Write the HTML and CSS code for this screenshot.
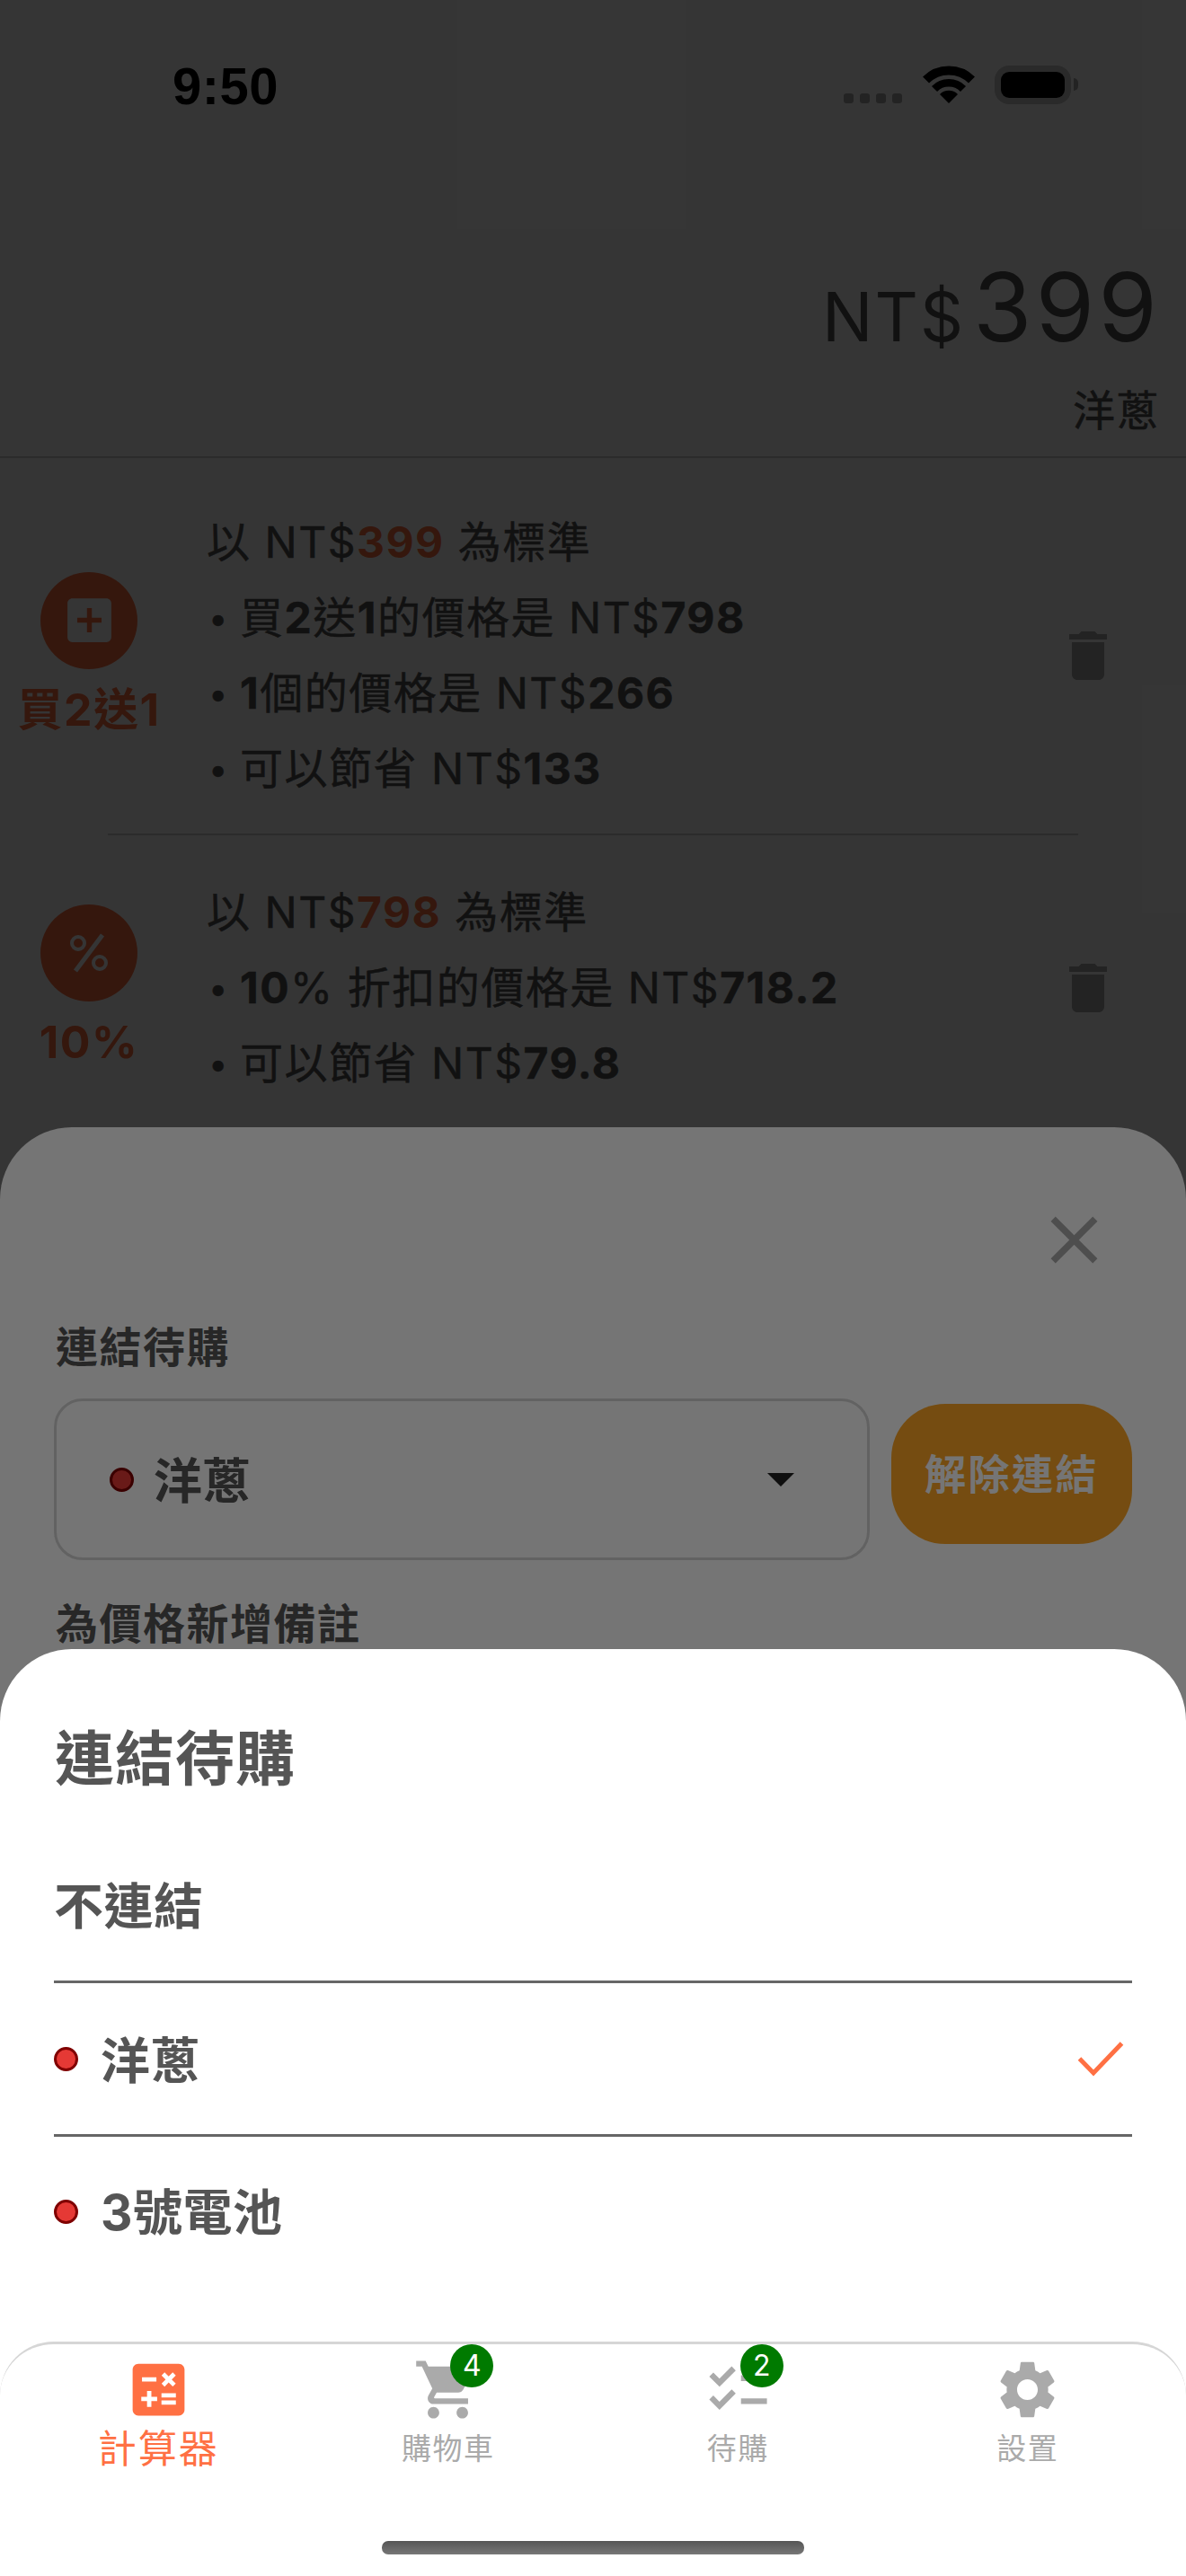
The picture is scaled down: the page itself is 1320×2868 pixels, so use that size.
FILE: index.html
```html
<!DOCTYPE html>
<html lang="zh-Hant">
<head>
<meta charset="utf-8">
<title>計算器</title>
<link rel="stylesheet" href="styles.css">
</head>
<body>
<div class="screen">
  <main class="base">
    <div class="status">
      <span class="time">9:50</span>
      <div class="status-icons">
        <div class="signal"><i></i><i></i><i></i><i></i></div>
        <svg class="wifi" viewBox="0 0 58 42"><path d="M29 42 19 32a14 14 0 0 1 20 0z" fill="#000"/><path d="M13 26a22.500 22.500 0 0 1 32 0" fill="none" stroke="#000" stroke-width="8.500"/><path d="M3.500 16a36 36 0 0 1 51 0" fill="none" stroke="#000" stroke-width="10"/></svg>
        <div class="battery"><div class="battery-fill"></div></div>
        <div class="battery-nub"></div>
      </div>
    </div>
    <header class="price-head">
      <div class="price"><span class="cur">NT$</span><span class="amount">399</span></div>
      <div class="price-name">洋蔥</div>
    </header>
    <section class="rows">
      <article class="row">
        <div class="badge-col">
          <div class="disc">
            <svg class="disc-icon" viewBox="0 0 24 24"><path d="M19 3H5c-1.110 0-2 .9-2 2v14c0 1.100.89 2 2 2h14c1.100 0 2-.9 2-2V5c0-1.100-.9-2-2-2zm-2 10h-4v4h-2v-4H7v-2h4V7h2v4h4v2z" fill="#fff"/></svg>
          </div>
          <div class="disc-label">買2送1</div>
        </div>
        <div class="lines">
          <div class="line">以 NT$<span class="hot">399</span> 為標準</div>
          <div class="line item"><span class="dot-b">•</span><span>買<b>2</b>送<b>1</b>的價格是 NT$<b>798</b></span></div>
          <div class="line item"><span class="dot-b">•</span><span><b>1</b>個的價格是 NT$<b>266</b></span></div>
          <div class="line item"><span class="dot-b">•</span><span>可以節省 NT$<b>133</b></span></div>
        </div>
        <svg class="trash" viewBox="0 0 24 24"><path d="M6 19c0 1.100.9 2 2 2h8c1.100 0 2-.9 2-2V7H6v12zM19 4h-3.500l-1-1h-5l-1 1H5v2h14V4z"/></svg>
      </article>
      <div class="rule"></div>
      <article class="row">
        <div class="badge-col">
          <div class="disc">
            <svg class="pct" viewBox="0 0 46 44"><path d="M38 2 8 42" stroke="#fff" stroke-width="5" fill="none"/><circle cx="11" cy="11" r="7" stroke="#fff" stroke-width="4" fill="none"/><circle cx="35" cy="33" r="7" stroke="#fff" stroke-width="4" fill="none"/></svg>
          </div>
          <div class="disc-label">10%</div>
        </div>
        <div class="lines">
          <div class="line">以 NT$<span class="hot">798</span> 為標準</div>
          <div class="line item"><span class="dot-b">•</span><span><b>10</b>% 折扣的價格是 NT$<b>718.2</b></span></div>
          <div class="line item"><span class="dot-b">•</span><span>可以節省 NT$<b>79.8</b></span></div>
        </div>
        <svg class="trash" viewBox="0 0 24 24"><path d="M6 19c0 1.100.9 2 2 2h8c1.100 0 2-.9 2-2V7H6v12zM19 4h-3.500l-1-1h-5l-1 1H5v2h14V4z"/></svg>
      </article>
    </section>
  </main>

  <div class="scrim"></div>

  <section class="sheet sheet-edit">
    <div class="close-row">
      <svg class="close" viewBox="0 0 24 24"><path d="M19 6.410 17.590 5 12 10.590 6.410 5 5 6.410 10.590 12 5 17.590 6.410 19 12 13.410 17.590 19 19 17.590 13.410 12z"/></svg>
    </div>
    <div class="field-label">連結待購</div>
    <div class="link-row">
      <div class="select">
        <span class="red-dot"></span>
        <span class="select-text">洋蔥</span>
        <span class="caret"></span>
      </div>
      <button class="unlink" type="button">解除連結</button>
    </div>
    <div class="field-label second">為價格新增備註</div>
  </section>

  <div class="scrim"></div>

  <section class="sheet sheet-pick">
    <h2 class="pick-title">連結待購</h2>
    <div class="option ruled first"><span class="option-text">不連結</span></div>
    <div class="option ruled">
      <span class="red-dot"></span><span class="option-text">洋蔥</span>
      <svg class="tick" viewBox="0 0 52 40"><path d="M2.500 20 18 36 49.500 3" fill="none" stroke="#ff7043" stroke-width="5"/></svg>
    </div>
    <div class="option last"><span class="red-dot"></span><span class="option-text">3號電池</span></div>

    <nav class="tabbar">
      <div class="tabs">
        <div class="tab active">
          <div class="tab-icon">
            <svg viewBox="0 0 24 24"><path d="M19,3H5C3.900,3,3,3.900,3,5v14c0,1.100,0.900,2,2,2h14c1.100,0,2-0.900,2-2V5C21,3.900,20.100,3,19,3z M13.030,7.060L14.090,6l1.410,1.410L16.910,6l1.060,1.060l-1.410,1.410l1.410,1.410l-1.060,1.060L15.500,9.540l-1.410,1.410l-1.060-1.060l1.410-1.410L13.030,7.060z M6.250,7.720h5v1.500h-5V7.720z M11.500,16h-2v2H8v-2H6v-1.500h2v-2h1.500v2h2V16z M18,17.250h-5v-1.500h5V17.250z M18,14.750h-5v-1.500h5V14.750z"/></svg>
          </div>
          <span class="tab-label">計算器</span>
        </div>
        <div class="tab">
          <div class="tab-icon">
            <svg viewBox="0 0 24 24"><path d="M7 18c-1.100 0-1.990.9-1.990 2S5.900 22 7 22s2-.9 2-2-.9-2-2-2zM1 2v2h2l3.600 7.590-1.350 2.450c-.16.28-.25.61-.25.96 0 1.100.9 2 2 2h12v-2H7.420c-.14 0-.25-.11-.25-.25l.03-.12.9-1.630h7.450c.75 0 1.410-.41 1.750-1.030l3.580-6.490c.08-.14.12-.31.12-.48 0-.55-.45-1-1-1H5.210l-.94-2H1zm16 16c-1.100 0-1.990.9-1.990 2s.89 2 1.990 2 2-.9 2-2-.9-2-2-2z"/></svg>
            <span class="count">4</span>
          </div>
          <span class="tab-label">購物車</span>
        </div>
        <div class="tab">
          <div class="tab-icon">
            <svg viewBox="0 0 24 24"><path d="M22,7h-9v2h9V7z M22,15h-9v2h9V15z M5.540,11L2,7.460l1.410-1.410l2.120,2.120l4.240-4.240l1.410,1.410L5.540,11z M5.540,19L2,15.460l1.410-1.410l2.120,2.120l4.240-4.240l1.410,1.410L5.540,19z"/></svg>
            <span class="count">2</span>
          </div>
          <span class="tab-label">待購</span>
        </div>
        <div class="tab">
          <div class="tab-icon">
            <svg viewBox="0 0 24 24"><path d="M19.140,12.940c0.040-0.300,0.060-0.610,0.060-0.940c0-0.320-0.020-0.640-0.070-0.940l2.030-1.580c0.180-0.140,0.230-0.410,0.120-0.610l-1.920-3.320c-0.120-0.220-0.370-0.290-0.590-0.220l-2.390,0.960c-0.500-0.380-1.030-0.700-1.620-0.940L14.400,2.810c-0.040-0.240-0.240-0.410-0.480-0.410h-3.840c-0.240,0-0.430,0.170-0.470,0.410L9.250,5.350C8.660,5.590,8.120,5.920,7.630,6.290L5.240,5.330c-0.220-0.080-0.470,0-0.590,0.220L2.740,8.870C2.620,9.080,2.660,9.340,2.860,9.480l2.030,1.580C4.840,11.360,4.800,11.690,4.800,12s0.020,0.640,0.070,0.940l-2.030,1.580c-0.180,0.140-0.230,0.410-0.120,0.610l1.920,3.320c0.120,0.220,0.370,0.290,0.590,0.220l2.390-0.960c0.500,0.380,1.030,0.700,1.620,0.940l0.360,2.540c0.050,0.240,0.240,0.410,0.480,0.410h3.840c0.240,0,0.440-0.170,0.470-0.410l0.360-2.540c0.590-0.240,1.130-0.560,1.620-0.940l2.390,0.960c0.220,0.080,0.470,0,0.590-0.220l1.920-3.320c0.120-0.220,0.070-0.470-0.120-0.610L19.140,12.940z M12,15.600c-1.980,0-3.600-1.620-3.600-3.600s1.620-3.600,3.600-3.600s3.600,1.620,3.600,3.600S13.980,15.600,12,15.600z"/></svg>
          </div>
          <span class="tab-label">設置</span>
        </div>
      </div>
      <div class="home-bar"></div>
    </nav>
  </section>
</div>
</body>
</html>
```
FILE: styles.css
```css
* { box-sizing: border-box; }
html, body { margin: 0; padding: 0; }
body {
  font-family: Inter, "Noto Sans CJK TC", sans-serif;
  color: #555;
  background: #fff;
}
.screen {
  position: relative;
  width: 1320px;
  height: 2868px;
  overflow: hidden;
  background: #fff;
}
.base { display: flex; flex-direction: column; }

/* status bar */
.status {
  display: flex;
  justify-content: space-between;
  align-items: flex-start;
  height: 196px;
  padding: 64px 120px 0 192px;
}
.time {
  font-family: "Liberation Sans", sans-serif;
  font-weight: 700;
  font-size: 58px;
  line-height: 64px;
  letter-spacing: 0.500px;
  color: #000;
}
.status-icons { display: flex; align-items: flex-start; padding-top: 9px; }
.signal { display: flex; gap: 7px; margin-top: 31px; margin-right: 23px; }
.signal i { display: block; width: 11px; height: 11px; border-radius: 3px; background: #aaa; }
.wifi { width: 58px; height: 42px; margin-right: 22px; }
.battery {
  width: 85px;
  height: 43px;
  border: 7px solid #c8c8c8;
  border-radius: 16px;
}
.battery-fill { width: 100%; height: 100%; background: #000; border-radius: 9px; }
.battery-nub { width: 5px; height: 14px; margin: 14px 0 0 3px; background: #aaa; border-radius: 0 6px 6px 0; }

/* price header */
.price-head {
  height: 314px;
  border-bottom: 2px solid #d0d0d0;
  padding: 85px 28px 0 0;
  display: flex;
  flex-direction: column;
  align-items: flex-end;
}
.price { display: flex; align-items: baseline; gap: 9px; height: 122px; color: #555; }
.cur { font-size: 75px; line-height: 122px; letter-spacing: 2px; }
.amount { font-size: 106px; line-height: 122px; letter-spacing: 4px; }
.price-name {
  font-size: 47px;
  line-height: 60px;
  letter-spacing: 1.500px;
  margin: 24px 1px 0 0;
  -webkit-text-stroke: 0.6px #555;
}

/* discount rows */
.rows { display: flex; flex-direction: column; padding-top: 8px; }
.row {
  display: flex;
  align-items: center;
  padding: 44px 73px 30px 0;
}
.row + .rule + .row { padding-bottom: 0; }
.rule { height: 2px; margin: 0 120px; background: #d0d0d0; }
.badge-col {
  width: 198px;
  margin-right: 32px;
  display: flex;
  flex-direction: column;
  align-items: center;
  gap: 11px;
  flex: none;
}
.disc {
  width: 108px;
  height: 108px;
  border-radius: 50%;
  background: #ff7043;
  display: flex;
  align-items: center;
  justify-content: center;
}
.disc-icon { width: 65px; height: 65px; }
.pct { width: 46px; height: 44px; }
.disc-label {
  font-size: 50px;
  line-height: 68px;
  font-weight: 700;
  color: #ff7043;
  letter-spacing: 1.500px;
  white-space: nowrap;
}
.lines { flex: 1; display: flex; flex-direction: column; }
.line {
  height: 84px;
  line-height: 84px;
  font-size: 48px;
  letter-spacing: 1.500px;
  white-space: nowrap;
  -webkit-text-stroke: 0.5px #555;
}
.line b { font-weight: 700; }
.item { display: flex; }
.dot-b { width: 37px; font-size: 38px; padding-left: 2px; flex: none; }
.hot { color: #ff7043; font-weight: 700; -webkit-text-stroke: 0; }
.trash { width: 72px; height: 72px; fill: #aaa; flex: none; }

/* bottom sheets */
.scrim { position: absolute; inset: 0; background: rgba(0, 0, 0, 0.54); }
.sheet {
  position: absolute;
  left: 0;
  right: 0;
  bottom: 0;
  background: #fff;
  border-radius: 80px 80px 0 0;
  display: flex;
  flex-direction: column;
}
.sheet-edit { top: 1255px; padding: 81px 60px 0 62px; }
.close-row { display: flex; justify-content: flex-end; padding-right: 20px; height: 89px; }
.close { width: 89px; height: 89px; fill: #aaa; }
.field-label { font-size: 47px; line-height: 60px; letter-spacing: 1.500px; font-weight: 700; margin-top: 45px; }
.field-label.second { margin-top: 41px; }
.link-row { display: flex; align-items: flex-start; gap: 24px; margin: 27px 0 0 -2px; }
.select {
  flex: 1;
  height: 180px;
  border: 3px solid #d6d6d6;
  border-radius: 32px;
  display: flex;
  align-items: center;
  padding: 0 81px 0 59px;
}
.red-dot {
  flex: none;
  width: 27px;
  height: 27px;
  border-radius: 50%;
  background: #e53935;
  border: 3px solid #7f0000;
}
.select-text { font-size: 54px; font-weight: 700; margin-left: 22px; padding-bottom: 4px; }
.caret {
  margin-left: auto;
  width: 0;
  height: 0;
  border-left: 15px solid transparent;
  border-right: 15px solid transparent;
  border-top: 15px solid #212121;
}
.unlink {
  width: 268px;
  height: 156px;
  margin-top: 6px;
  padding: 0;
  border: 0;
  border-radius: 60px;
  background: #ffa726;
  color: #fff;
  font: 700 46px/60px Inter, "Noto Sans CJK TC", sans-serif;
  letter-spacing: 2.500px;
}

.sheet-pick { top: 1836px; padding-top: 82px; }
.pick-title {
  margin: 0 0 37px;
  padding: 0 61px;
  font-size: 66px;
  line-height: 80px;
  letter-spacing: 1px;
  font-weight: 700;
}
.option {
  height: 171px;
  margin: 0 60px;
  display: flex;
  align-items: center;
}
.option.ruled { border-bottom: 3px solid #666; }
.option.first { height: 173px; }
.option.last { height: 167px; }
.option-text { font-size: 55px; letter-spacing: 0.500px; font-weight: 700; padding-bottom: 4px; }
.option.last .option-text { padding-bottom: 7px; }
.red-dot + .option-text { margin-left: 25px; }
.tick { width: 52px; height: 40px; margin-left: auto; margin-right: 9px; }

/* tab bar */
.tabbar {
  margin-top: auto;
  height: 261px;
  background: #fff;
  border-top: 3px solid #d6d6d6;
  border-radius: 60px 60px 0 0;
  display: flex;
  flex-direction: column;
}
.tabs { display: grid; grid-template-columns: repeat(4, 1fr); padding: 12px 15px 0; }
.tab { display: flex; flex-direction: column; align-items: center; color: #aaa; }
.tab.active { color: #ff7043; }
.tab-icon { position: relative; width: 77px; height: 77px; }
.tab-icon svg { display: block; width: 77px; height: 77px; fill: currentColor; }
.tab-label { margin-top: 4px; font-size: 33px; line-height: 46px; letter-spacing: 1.500px; }
.tab.active .tab-label { font-size: 43px; letter-spacing: 2px; }
.count {
  position: absolute;
  left: 41px;
  top: -12px;
  width: 48px;
  height: 48px;
  border-radius: 50%;
  background: #007a00;
  color: #fff;
  font-size: 32px;
  line-height: 48px;
  text-align: center;
}
.home-bar {
  width: 470px;
  height: 15px;
  margin: auto auto 24px;
  border-radius: 7px;
  background: linear-gradient(#555, #777);
}
```
